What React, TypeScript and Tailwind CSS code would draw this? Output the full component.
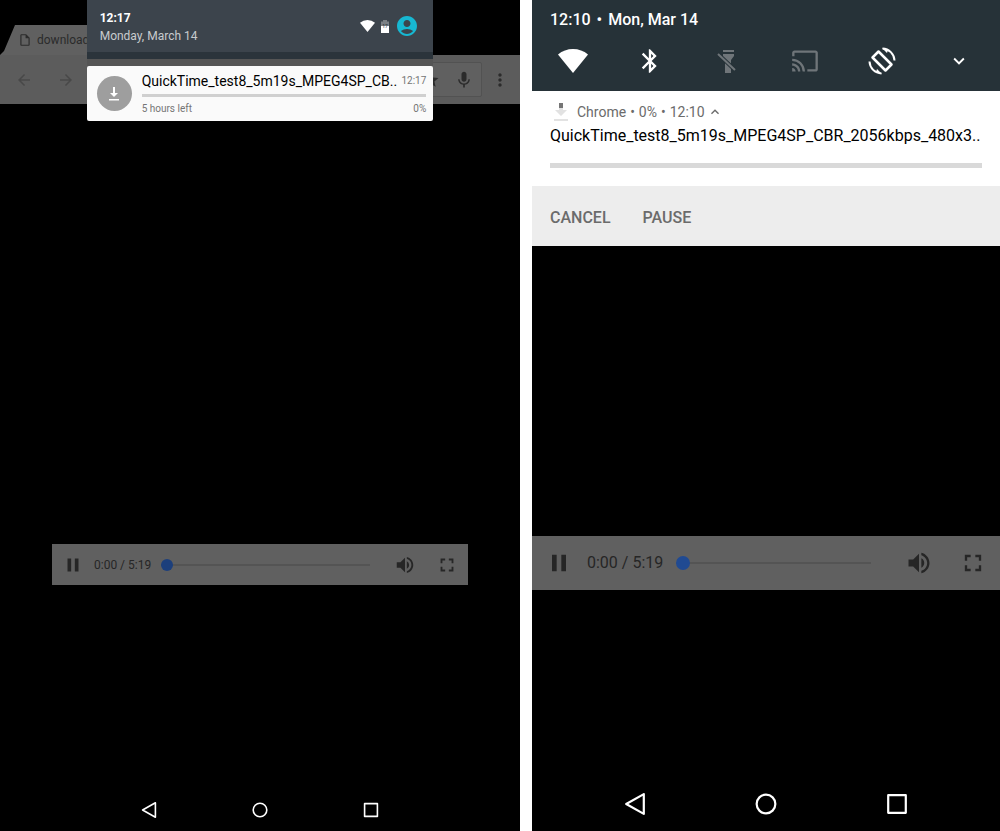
import type { ReactNode } from "react";
import {
  MdAccountCircle,
  MdArrowBack,
  MdArrowForward,
  MdBluetooth,
  MdCast,
  MdExpandLess,
  MdExpandMore,
  MdFullscreen,
  MdMic,
  MdMoreVert,
  MdOutlineInsertDriveFile,
  MdPause,
  MdStar,
  MdVolumeUp,
} from "react-icons/md";

function WifiIcon({ className }: { className: string }) {
  return (
    <svg viewBox="0 0 30 24" className={className} fill="currentColor" aria-hidden="true">
      <path d="M15 24 0 5.500Q6.500 0 15 0t15 5.500z" />
    </svg>
  );
}

function BatteryIcon() {
  return (
    <svg viewBox="0 0 10 13" className="h-[13px] w-[10px]" aria-hidden="true">
      <path d="M3 0h4v1.500h2V6H1V1.500h2z" fill="#7b8085" />
      <path d="M1 6h8v7H1z" fill="#fff" />
      <text x="5" y="8" fontSize="5" textAnchor="middle" fill="#2b343b" fontFamily="Roboto, sans-serif">
        17
      </text>
    </svg>
  );
}

function FlashlightOffIcon() {
  return (
    <svg viewBox="0 0 20 26" className="h-[26px] w-5" aria-hidden="true">
      <path d="M6 2h11v2H6z" fill="#6f7579" />
      <path d="M6 6h11v2l-3 4v13H8V12L6 9z" fill="#6f7579" />
      <path d="m1 6 17 16" stroke="#263238" strokeWidth="4" />
      <path d="m1 6 17 16" stroke="#6f7579" strokeWidth="2" />
    </svg>
  );
}

function RotateIcon() {
  return (
    <svg viewBox="0 0 28 28" className="size-7" fill="none" stroke="currentColor" aria-hidden="true">
      <path d="M10.500 4.500 23.500 17.500 17.500 23.500 4.500 10.500z" strokeWidth="2.500" strokeLinejoin="round" />
      <path d="M14.500 1.500A12.500 12.500 0 0 1 26.500 13.500M13.500 26.500A12.500 12.500 0 0 1 1.500 14.500" strokeWidth="2" />
      <path d="m14 1 5 5 1-3zM14 27l-5-5-1 3z" fill="currentColor" stroke="none" />
    </svg>
  );
}

function DownloadIcon() {
  return (
    <svg viewBox="0 0 12 14" className="h-[14px] w-3" fill="#fff" aria-hidden="true">
      <path d="M5 0h2v6h3l-4 4-4-4h3z" />
      <path d="M1 12h10v1.500H1z" />
    </svg>
  );
}

// first frame of the animated download icon
function DownloadingIcon() {
  return (
    <svg viewBox="0 0 16 20" className="h-5 w-4" aria-hidden="true">
      <path d="M6 1h4v5H6z" fill="#757575" />
      <path d="M6 6h4v2h4l-6 6-6-6h4z" fill="#e2e2e2" />
      <path d="M1 17h14v2H1z" fill="#e2e2e2" />
    </svg>
  );
}

function NavButton({ label, children }: { label: string; children: ReactNode }) {
  return (
    <button type="button" aria-label={label} className="flex items-center justify-center text-white">
      {children}
    </button>
  );
}

function NavBar({ className, iconClass }: { className: string; iconClass: string }) {
  return (
    <nav aria-label="System" className={`mx-auto grid grid-cols-3 ${className}`}>
      <NavButton label="Back">
        <svg viewBox="0 0 20 20" className={iconClass} fill="none" stroke="currentColor" strokeWidth="2" strokeLinejoin="round">
          <path d="M18 1v18L2 10z" />
        </svg>
      </NavButton>
      <NavButton label="Home">
        <svg viewBox="0 0 20 20" className={iconClass} fill="none" stroke="currentColor" strokeWidth="2">
          <circle cx="10" cy="10" r="8.500" />
        </svg>
      </NavButton>
      <NavButton label="Recent apps">
        <svg viewBox="0 0 20 20" className={iconClass} fill="none" stroke="currentColor" strokeWidth="2" strokeLinejoin="round">
          <path d="M2 2h16v16H2z" />
        </svg>
      </NavButton>
    </nav>
  );
}

function TabletScreen() {
  return (
    <section className="relative flex grow-[520] basis-0 flex-col bg-black">
      <header className="text-[#2b2b2b]">
        <div className="flex h-[55px] items-end">
          <div className="flex h-[30px] w-1/4 items-center gap-[5px] bg-[#606060] pl-[18px] [clip-path:polygon(15px_0,100%_0,100%_100%,0_100%,4px_26px)]">
            <MdOutlineInsertDriveFile className="size-[14px] shrink-0" />
            <span className="text-xs">downloads</span>
          </div>
        </div>
        <div className="flex h-[49px] items-center bg-[#5c5c5c]">
          <button type="button" aria-label="Back" className="ml-[15px] text-[#484848]">
            <MdArrowBack className="size-[18px]" />
          </button>
          <button type="button" aria-label="Forward" className="ml-6 text-[#484848]">
            <MdArrowForward className="size-[18px]" />
          </button>
          <div className="ml-6 flex h-[35px] grow items-center justify-end gap-[14px] rounded-xs border border-[#525252] bg-[#606060] pr-[7px]">
            <button type="button" aria-label="Bookmark">
              <MdStar className="size-[18px]" />
            </button>
            <button type="button" aria-label="Voice search">
              <MdMic className="size-5" />
            </button>
          </div>
          <button type="button" aria-label="Menu" className="mr-[10px] ml-2">
            <MdMoreVert className="size-5" />
          </button>
        </div>
      </header>

      <div className="grow-[440] basis-0" />
      <div className="mx-[10%] flex h-[41px] items-center bg-[#606060] px-[10px] text-[#262626]">
        <button type="button" aria-label="Pause">
          <MdPause className="size-[22px]" />
        </button>
        <span className="ml-[10px] text-xs whitespace-nowrap">0:00 / 5:19</span>
        <input
          type="range"
          aria-label="Seek"
          min={0}
          max={319}
          defaultValue={0}
          className="ml-[10px] h-3 min-w-0 grow appearance-none bg-transparent [&::-webkit-slider-runnable-track]:h-[2px] [&::-webkit-slider-runnable-track]:bg-[#545454] [&::-webkit-slider-thumb]:-mt-[5px] [&::-webkit-slider-thumb]:size-3 [&::-webkit-slider-thumb]:appearance-none [&::-webkit-slider-thumb]:rounded-full [&::-webkit-slider-thumb]:bg-[#1c3f7c]"
        />
        <button type="button" aria-label="Mute" className="ml-6">
          <MdVolumeUp className="size-[22px]" />
        </button>
        <button type="button" aria-label="Full screen" className="ml-5">
          <MdFullscreen className="size-[22px]" />
        </button>
      </div>
      <div className="grow-[204] basis-0" />
      <NavBar className="h-[42px] w-[64%]" iconClass="size-4" />

      {/* notification shade over the browser */}
      <div className="absolute top-0 left-1/6 w-2/3">
        <div className="flex h-[59px] justify-between border-b-[7px] border-[#2b343b] bg-[#3c444c] pr-[14px] pl-[13px]">
          <div className="pt-[9px]">
            <div className="text-xs leading-[18px] font-bold text-white">12:17</div>
            <div className="text-xs leading-[18px] text-[#c8cbce]">Monday, March 14</div>
          </div>
          <div className="flex items-center gap-[5px] text-white">
            <WifiIcon className="h-3 w-[15px]" />
            <BatteryIcon />
            <button type="button" aria-label="Account" className="text-[#17b8d2]">
              <MdAccountCircle className="size-6" />
            </button>
          </div>
        </div>
        <div className="h-[7px] bg-[#555555]" />
        <article className="flex h-[55px] items-center rounded-xs bg-[#fafafa] pr-[7px] pl-[10px]">
          <div className="flex size-[35px] shrink-0 items-center justify-center rounded-full bg-[#9e9e9e]">
            <DownloadIcon />
          </div>
          <div className="ml-[10px] min-w-0 grow">
            <div className="flex items-center justify-between">
              <h2 className="text-sm leading-5 whitespace-nowrap text-black">QuickTime_test8_5m19s_MPEG4SP_CB..</h2>
              <time className="text-[10px] text-[#757575]">12:17</time>
            </div>
            <div role="progressbar" aria-label="Download" aria-valuenow={0} className="mt-[3px] h-[3px] bg-[#d0d0d0]" />
            <div className="mt-1 flex justify-between text-[10px] leading-4 text-[#757575]">
              <span>5 hours left</span>
              <span>0%</span>
            </div>
          </div>
        </article>
      </div>
    </section>
  );
}

function PhoneScreen() {
  return (
    <section className="flex grow-[468] basis-0 flex-col bg-black">
      <header className="h-[91px] bg-[#263238] text-white">
        <div className="flex gap-[6px] pt-[10px] pl-[18px] text-base leading-5 font-medium">
          <span>12:10</span>
          <span>•</span>
          <span>Mon, Mar 14</span>
        </div>
        <div className="mt-4 grid h-[30px] grid-cols-6 px-[2px]">
          <button type="button" aria-label="Wi-Fi" className="flex items-center justify-center">
            <WifiIcon className="h-6 w-[30px]" />
          </button>
          <button type="button" aria-label="Bluetooth" className="flex items-center justify-center">
            <MdBluetooth className="size-7" />
          </button>
          <button type="button" aria-label="Flashlight" className="flex items-center justify-center">
            <FlashlightOffIcon />
          </button>
          <button type="button" aria-label="Cast" className="flex items-center justify-center text-[#6f7579]">
            <MdCast className="size-7" />
          </button>
          <button type="button" aria-label="Auto-rotate" className="flex items-center justify-center">
            <RotateIcon />
          </button>
          <button type="button" aria-label="Expand" className="flex items-center justify-center">
            <MdExpandMore className="size-[22px]" />
          </button>
        </div>
      </header>

      <article className="bg-white">
        <div className="h-[95px] px-[18px] pt-[10px]">
          <div className="flex items-center text-sm leading-[22px] text-[#6b6b6b]">
            <div className="flex w-[22px] justify-center">
              <DownloadingIcon />
            </div>
            <div className="ml-[5px] flex gap-1">
              <span>Chrome</span>
              <span>•</span>
              <span>0%</span>
              <span>•</span>
              <span>12:10</span>
            </div>
            <MdExpandLess className="ml-[2px] size-4" />
          </div>
          <h2 className="mt-[3px] text-base leading-5 whitespace-nowrap text-black">
            QuickTime_test8_5m19s_MPEG4SP_CBR_2056kbps_480x3..
          </h2>
          <div role="progressbar" aria-label="Download" aria-valuenow={0} className="mt-[17px] h-[5px] bg-[#d9d9d9]" />
        </div>
        <div className="flex h-[60px] items-center gap-8 bg-[#ededed] px-[18px] pt-1 text-base font-medium text-[#6b6b6b]">
          <button type="button">CANCEL</button>
          <button type="button">PAUSE</button>
        </div>
      </article>

      <div className="grow-[289] basis-0" />
      <div className="flex h-[54px] items-center bg-[#606060] px-[13px] text-[#262626]">
        <button type="button" aria-label="Pause">
          <MdPause className="size-7" />
        </button>
        <span className="ml-[14px] text-base whitespace-nowrap">0:00 / 5:19</span>
        <input
          type="range"
          aria-label="Seek"
          min={0}
          max={319}
          defaultValue={0}
          className="ml-[13px] h-[14px] min-w-0 grow appearance-none bg-transparent [&::-webkit-slider-runnable-track]:h-[2px] [&::-webkit-slider-runnable-track]:bg-[#545454] [&::-webkit-slider-thumb]:-mt-[6px] [&::-webkit-slider-thumb]:size-[14px] [&::-webkit-slider-thumb]:appearance-none [&::-webkit-slider-thumb]:rounded-full [&::-webkit-slider-thumb]:bg-[#204a92]"
        />
        <button type="button" aria-label="Mute" className="ml-[34px]">
          <MdVolumeUp className="size-7" />
        </button>
        <button type="button" aria-label="Full screen" className="ml-[26px]">
          <MdFullscreen className="size-7" />
        </button>
      </div>
      <div className="grow-[187] basis-0" />
      <NavBar className="h-[54px] w-[84%]" iconClass="size-[22px]" />
    </section>
  );
}

export default function App() {
  return (
    <main className="flex min-h-screen gap-3 bg-white font-[Roboto,sans-serif]">
      <TabletScreen />
      <PhoneScreen />
    </main>
  );
}
